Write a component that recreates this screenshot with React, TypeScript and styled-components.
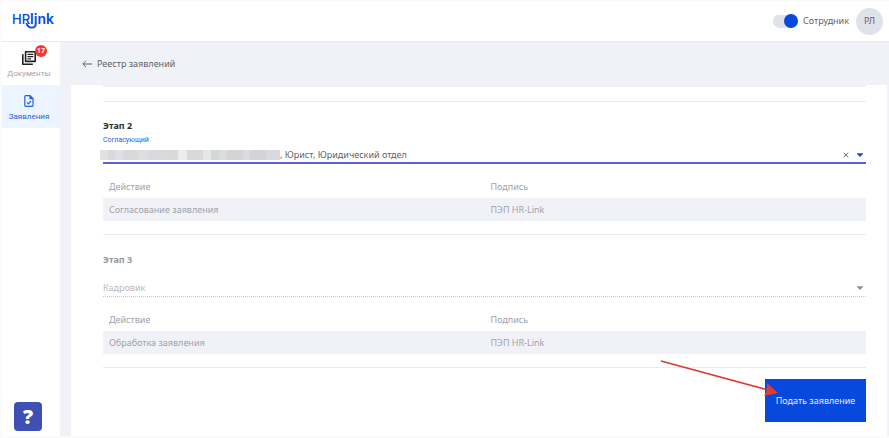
import React, { useState } from "react";
import styled, { createGlobalStyle } from "styled-components";

const GlobalStyle = createGlobalStyle`
  * { box-sizing: border-box; }
  body { margin: 0; background: #fbfbfb; font-family: "Noto Sans", sans-serif; font-size: 9px; line-height: 14px; color: #5f6368; }
  button, input { font: inherit; color: inherit; border: 0; background: none; padding: 0; }
  button { cursor: pointer; }
`;

const Page = styled.div`
  min-height: 100vh;
  padding: 0 0 2px 2px;
  display: flex;
  flex-direction: column;
`;

const Header = styled.header`
  height: 42px;
  padding: 0 6px 0 9px;
  display: flex;
  align-items: center;
  justify-content: space-between;
  background: #fff;
  border-top: 1px solid #fafafa;
  border-bottom: 1px solid #e9eaee;
`;

const LogoLink = styled.a`
  display: block;
  line-height: 0;
`;

const UserArea = styled.div`
  display: flex;
  align-items: center;
  gap: 7px;
`;

const SwitchLabel = styled.label`
  display: flex;
  align-items: center;
  gap: 5px;
  cursor: pointer;
`;

const Switch = styled.input`
  appearance: none;
  margin: 0;
  width: 25px;
  height: 14px;
  display: flex;
  align-items: center;
  border-radius: 7px;
  background: linear-gradient(#dfe2e9, #dfe2e9) center / 100% 13px no-repeat;
  &::before {
    content: "";
    width: 14px;
    height: 14px;
    border-radius: 50%;
    background: #0649dc;
  }
  &:checked { justify-content: flex-end; }
`;

const Avatar = styled.button`
  width: 27px;
  height: 27px;
  border-radius: 50%;
  background: #dfe2e9;
`;

const Body = styled.div`
  flex: 1;
  display: flex;
  background: #f1f2f7;
`;

const Sidebar = styled.nav`
  width: 58px;
  background: #fff;
  display: flex;
  flex-direction: column;
`;

const NavItem = styled.a<{ $active?: boolean }>`
  height: 43px;
  padding: 8px 4px 0 0;
  display: flex;
  flex-direction: column;
  align-items: center;
  gap: 2px;
  font-family: Roboto, sans-serif;
  font-size: 8px;
  line-height: 12px;
  text-decoration: none;
  white-space: nowrap;
  color: ${(p) => (p.$active ? "#2a62dc" : "#a3a5a9")};
  background: ${(p) => (p.$active ? "#ebf4ff" : "transparent")};
`;

const IconBox = styled.span`
  position: relative;
  height: 16px;
  display: flex;
  align-items: center;
`;

const Badge = styled.span`
  position: absolute;
  top: -5px;
  left: 13px;
  width: 12px;
  height: 12px;
  border-radius: 50%;
  background: #f8372f;
  color: #fff;
  font-size: 7px;
  line-height: 12px;
  font-weight: 700;
  text-align: center;
`;

const HelpButton = styled.button`
  margin: auto 0 5px 12px;
  width: 28px;
  height: 29px;
  border-radius: 4px;
  background: #3f50b5;
  color: #fff;
  font-size: 20px;
  line-height: 28px;
  font-weight: 900;
`;

const Main = styled.main`
  flex: 1;
  min-width: 0;
  padding: 0 2px 0 11px;
  display: flex;
  flex-direction: column;
`;

const BackLink = styled.a`
  height: 43px;
  padding-left: 11px;
  display: flex;
  align-items: center;
  gap: 5px;
  color: inherit;
  text-decoration: none;
`;

const Panel = styled.section`
  flex: 1;
  background: #fff;
  padding: 0 21px 14px 32px;
`;

const PreviousRow = styled.div`
  height: 2px;
  background: #f1f2f7;
`;

const Divider = styled.hr<{ $gap: number }>`
  margin: ${(p) => p.$gap}px 0 0;
  border: 0;
  height: 1px;
  background: #e9eaee;
`;

const Stage = styled.section<{ $muted?: boolean }>`
  padding-top: ${(p) => (p.$muted ? 18 : 17)}px;
`;

const StageTitle = styled.h2<{ $muted?: boolean }>`
  margin: 0;
  font-family: "Noto Sans", sans-serif;
  font-size: 9px;
  line-height: 14px;
  font-weight: 700;
  color: ${(p) => (p.$muted ? "#96989c" : "#2d2e31")};
`;

const FieldLabel = styled.label`
  display: block;
  font-family: Roboto, sans-serif;
  font-size: 7px;
  line-height: 14px;
  color: #2a62dc;
`;

const Field = styled.div<{ $muted?: boolean }>`
  height: 17px;
  margin-top: ${(p) => (p.$muted ? 13 : 0)}px;
  padding-right: 2px;
  display: flex;
  align-items: center;
  border-bottom: ${(p) => (p.$muted ? "1px dotted #c6c7ca" : "2px solid #5d60d3")};
`;

const Redacted = styled.span`
  margin-left: -3px;
  width: 180px;
  height: 10px;
  background: linear-gradient(90deg, #e3dfe2 0 8px, #dadade 8px 15px, #dedfe7 15px 23px, #d9d9dc 23px 38px, #dedede 38px 48px, #d9dadd 48px 63px, #d8d9da 63px 78px, #ececec 78px 87px, #d8d9da 87px 103px, #e6e7e0 103px 111px, #d2d8d8 111px 119px, #dadcdd 119px 127px, #d4d4d7 127px 143px, #dadbdf 143px 150px, #d4d4d6 150px 166px, #dadade 166px);
`;

const FieldInput = styled.input`
  flex: 1;
  min-width: 0;
  height: 14px;
  outline: 0;
  &::placeholder { color: #b6b8bb; opacity: 1; }
`;

const IconButton = styled.button`
  display: flex;
  align-items: center;
  justify-content: center;
  width: 8px;
  height: 12px;
  margin-left: 6px;
`;

const ActionTable = styled.table`
  width: 100%;
  margin-top: 11px;
  border-collapse: collapse;
  table-layout: fixed;
  color: #a0a2a6;
  th, td {
    height: 23px;
    padding: 0 6px;
    font-weight: 400;
    text-align: left;
    vertical-align: middle;
  }
  td { background: #f1f2f7; }
`;

const Footer = styled.footer`
  padding-top: 11px;
  display: flex;
  justify-content: flex-end;
`;

const SubmitArea = styled.div`
  position: relative;
`;

const SubmitButton = styled.button`
  height: 43px;
  padding: 0 10px;
  min-width: 101px;
  background: #0649dc;
  color: #e6edfc;
  white-space: nowrap;
`;

const Pointer = styled.svg`
  position: absolute;
  top: -20px;
  right: 86px;
  pointer-events: none;
`;

const Logo = () => (
  <svg width="46" height="28" viewBox="-1 -4 46 28" fill="none" role="img" aria-label="HR link">
    <text x="0" y="13" fill="#0649dc" fontFamily="Inter, sans-serif" fontSize="14" fontWeight="600">
      <tspan fontSize="13" fontWeight="500">HR</tspan>link
    </text>
    <path d="M14.5 12C15.2 14.8 17.2 16.6 19.8 16.6C22.4 16.6 23.8 14.8 23.8 12.4" stroke="#0649dc" strokeWidth="1.8" />
  </svg>
);

const Caret = ({ color }: { color: string }) => (
  <svg width="6" height="4" viewBox="0 0 6 4" aria-hidden="true"><path d="M0 .2H6V1L3 4L0 1Z" fill={color} /></svg>
);

const stages = [
  { title: "Этап 2", role: "Согласующий", value: ", Юрист, Юридический отдел", action: "Согласование заявления" },
  { title: "Этап 3", role: "Кадровик", value: "", action: "Обработка заявления" },
];

const StageBlock = ({ stage, index }: { stage: (typeof stages)[number]; index: number }) => {
  const [value, setValue] = useState(stage.value);
  const muted = !stage.value;
  const id = `approver-${index}`;
  return (
    <Stage $muted={muted}>
      <StageTitle $muted={muted}>{stage.title}</StageTitle>
      {!muted && <FieldLabel htmlFor={id}>{stage.role}</FieldLabel>}
      <Field $muted={muted}>
        {!muted && value && <Redacted />}
        <FieldInput
          id={id}
          aria-label={muted ? stage.role : undefined}
          placeholder={muted ? stage.role : undefined}
          value={value}
          onChange={(e) => setValue(e.target.value)}
        />
        {!muted && (
          <IconButton type="button" aria-label="Очистить" onClick={() => setValue("")}>
            <svg width="6" height="6" viewBox="0 0 6 6" stroke="#777" strokeWidth="1"><path d="M.7.7L5.3 5.3M5.3.7L.7 5.3" /></svg>
          </IconButton>
        )}
        <IconButton type="button" aria-label="Открыть список">
          <Caret color={muted ? "#8f9195" : "#2f45c0"} />
        </IconButton>
      </Field>
      <ActionTable>
        <thead><tr><th scope="col">Действие</th><th scope="col">Подпись</th></tr></thead>
        <tbody><tr><td>{stage.action}</td><td>ПЭП HR-Link</td></tr></tbody>
      </ActionTable>
      <Divider $gap={13} />
    </Stage>
  );
};

export default function App() {
  const [employee, setEmployee] = useState(true);
  return (
    <>
      <GlobalStyle />
      <Page>
        <Header>
          <LogoLink href="#"><Logo /></LogoLink>
          <UserArea>
            <SwitchLabel>
              <Switch type="checkbox" role="switch" checked={employee} onChange={(e) => setEmployee(e.target.checked)} />
              Сотрудник
            </SwitchLabel>
            <Avatar type="button">РЛ</Avatar>
          </UserArea>
        </Header>
        <Body>
          <Sidebar>
            <NavItem href="#documents">
              <IconBox>
                <svg width="14" height="14" viewBox="0 0 14 14" fill="none" stroke="#222" strokeWidth="1.6" aria-hidden="true">
                  <path d="M3.6.8H13.2V10.4H3.6ZM.8 3.2V13.2H10.8" strokeLinejoin="round" />
                  <path d="M5.5 3.3H11.3M5.5 5.6H11.3M5.5 7.9H9" strokeWidth="1.2" />
                </svg>
                <Badge>17</Badge>
              </IconBox>
              Документы
            </NavItem>
            <NavItem href="#applications" $active>
              <IconBox>
                <svg width="10" height="12" viewBox="0 0 10 12" fill="none" stroke="#2a62dc" strokeWidth="1.2" aria-hidden="true">
                  <path d="M6 .6H1.6Q.8.6.8 1.4V10.6Q.8 11.4 1.6 11.4H8.2Q9 11.4 9 10.6V3.6ZM6 .6V3.6H9M3 7.4L4.4 8.8L7 6" />
                </svg>
              </IconBox>
              Заявления
            </NavItem>
            <HelpButton type="button" aria-label="Помощь">?</HelpButton>
          </Sidebar>
          <Main>
            <BackLink href="#registry">
              <svg width="10" height="8" viewBox="0 0 10 8" fill="none" stroke="#5f6368" strokeWidth="1" aria-hidden="true"><path d="M10 4H1M4 .8L.8 4L4 7.2" /></svg>
              Реестр заявлений
            </BackLink>
            <Panel>
              <PreviousRow />
              <Divider $gap={14} />
              {stages.map((stage, i) => <StageBlock key={stage.title} stage={stage} index={i + 2} />)}
              <Footer>
                <SubmitArea>
                  <SubmitButton type="button">Подать заявление</SubmitButton>
                  <Pointer width="120" height="40" viewBox="0 0 120 40" aria-hidden="true">
                    <path d="M1 2L108 31" stroke="#df3a32" strokeWidth="1.7" />
                    <path d="M107 24L118 34L104 37L107 31Z" fill="#e23b33" />
                  </Pointer>
                </SubmitArea>
              </Footer>
            </Panel>
          </Main>
        </Body>
      </Page>
    </>
  );
}
